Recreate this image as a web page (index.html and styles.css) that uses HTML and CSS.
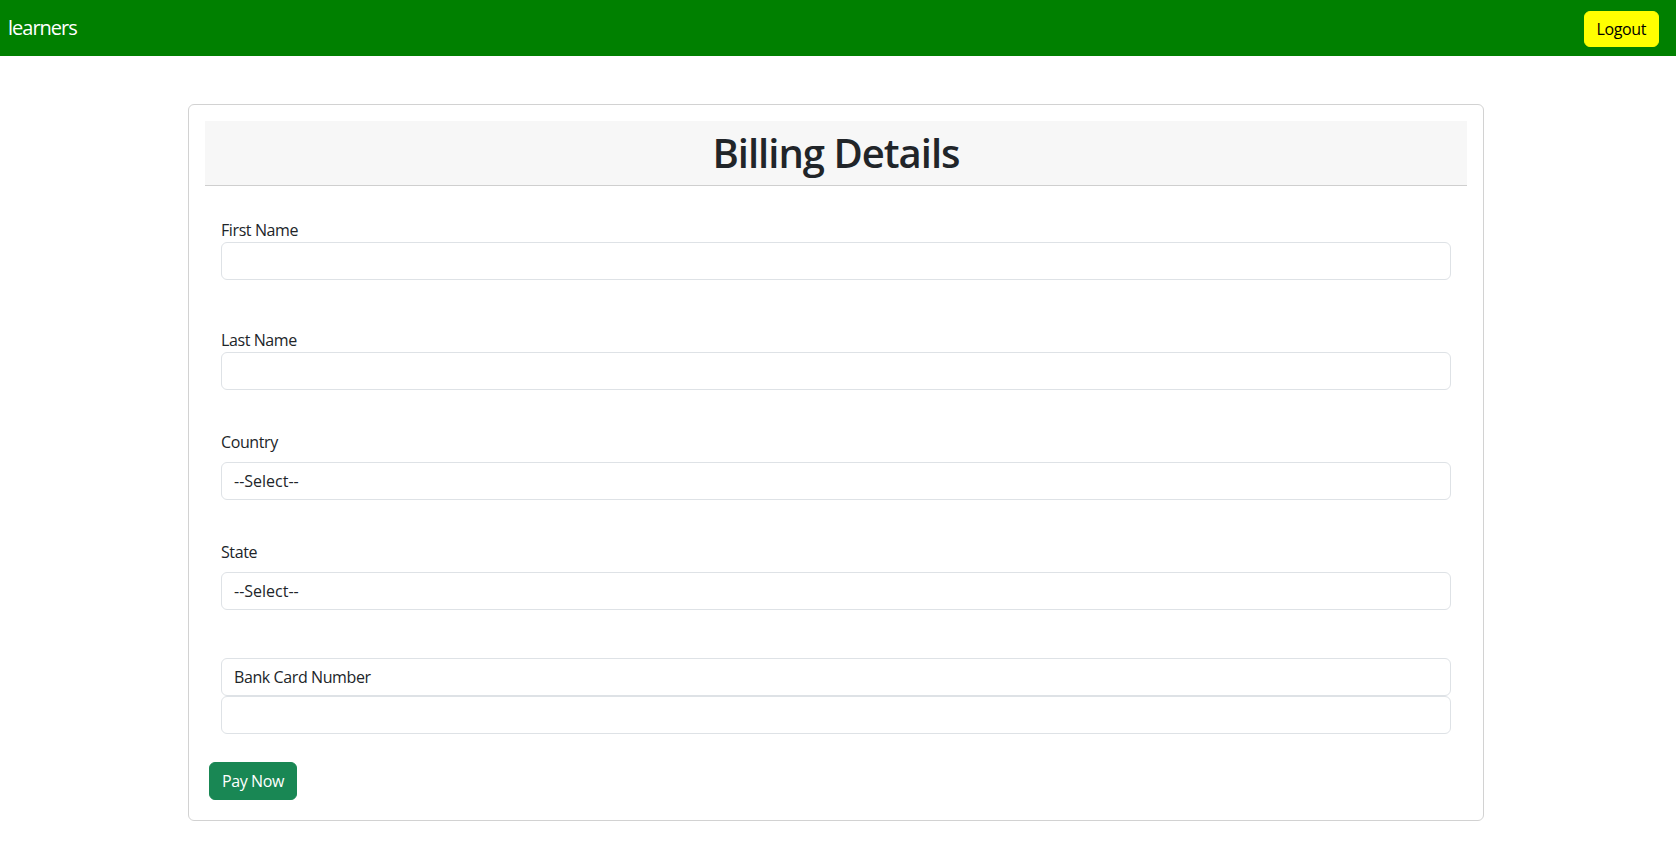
FILE: index.html
```html
<!DOCTYPE html>
<html lang="en">
<head>
<meta charset="utf-8">
<title>Billing Details</title>
<link rel="stylesheet" href="styles.css">
</head>
<body>
<nav class="navbar">
  <span class="brand">learners</span>
  <button class="btn-logout" type="button">Logout</button>
</nav>
<main class="page">
  <div class="card">
    <div class="card-header">
      <h1 class="title">Billing Details</h1>
    </div>
    <form class="card-body">
      <div class="group first">
        <label class="lbl">First Name</label>
        <input class="ctl" type="text">
      </div>
      <div class="group gap48">
        <label class="lbl">Last Name</label>
        <input class="ctl" type="text">
      </div>
      <div class="group gap40">
        <label class="lbl form-label">Country</label>
        <select class="ctl sel">
          <option>--Select--</option>
        </select>
      </div>
      <div class="group gap40">
        <label class="lbl form-label">State</label>
        <select class="ctl sel">
          <option>--Select--</option>
        </select>
      </div>
      <div class="group gap48">
        <span class="ctl addon">Bank Card Number</span>
        <input class="ctl" type="text">
      </div>
    </form>
    <div class="actions">
      <button class="btn-pay" type="button">Pay Now</button>
    </div>
  </div>
</main>
</body>
</html>
```

FILE: styles.css
```css
* { box-sizing: border-box; }
html, body { margin: 0; padding: 0; }
body {
  font-family: "Open Sans", "Noto Sans", Arial, sans-serif;
  font-size: 16px;
  line-height: 1.5;
  letter-spacing: -0.4px;
  color: #212529;
  background: #fff;
}
.navbar {
  height: 56px;
  background: #008000;
  display: flex;
  align-items: center;
  justify-content: space-between;
  padding: 0 17px 0 8px;
}
.brand {
  color: #fff;
  font-size: 20px;
  line-height: 30px;
  letter-spacing: -1px;
}
.btn-logout {
  background: #ffff00;
  border: 1px solid #ffff00;
  border-radius: 6px;
  color: #000;
  font-family: inherit;
  font-size: 16px;
  line-height: 24px;
  letter-spacing: inherit;
  height: 36px;
  padding: 0 12px;
  margin-top: 1px;
}
.page {
  padding-top: 48px;
}
.card {
  width: 1296px;
  margin-left: calc(50% - 650px);
  border: 1px solid #d2d2d2;
  border-radius: 6px;
  padding: 16px 16px 20px 16px;
}
.card-header {
  background: #f7f7f7;
  border-bottom: 1px solid #cfcfcf;
  padding: 8px 16px;
  text-align: center;
}
.title {
  margin: 0;
  font-size: 40px;
  line-height: 48px;
  font-weight: 600;
  letter-spacing: -1px;
}
.card-body {
  padding: 0 16px;
  margin: 0;
}
.group {
  display: flex;
  flex-direction: column;
}
.group.first { margin-top: 32px; }
.group.gap48 { margin-top: 48px; }
.group.gap40 { margin-top: 40px; }
.lbl {
  display: block;
  height: 24px;
  line-height: 24px;
}
.lbl.form-label { margin-bottom: 8px; }
.ctl {
  display: block;
  width: 100%;
  height: 38px;
  padding: 6px 12px;
  font-family: inherit;
  font-size: 16px;
  line-height: 24px;
  letter-spacing: inherit;
  color: #212529;
  background: #fff;
  border: 1px solid #dee2e6;
  border-radius: 6px;
  appearance: none;
  -webkit-appearance: none;
  outline: none;
}
.ctl.sel { letter-spacing: 0; }
.addon {
  white-space: nowrap;
}
.actions {
  margin-top: 28px;
  padding-left: 4px;
}
.btn-pay {
  background: #198754;
  border: 1px solid #198754;
  border-radius: 6px;
  color: #fff;
  font-family: inherit;
  font-size: 16px;
  line-height: 24px;
  letter-spacing: inherit;
  height: 38px;
  padding: 0 12px;
}
```
